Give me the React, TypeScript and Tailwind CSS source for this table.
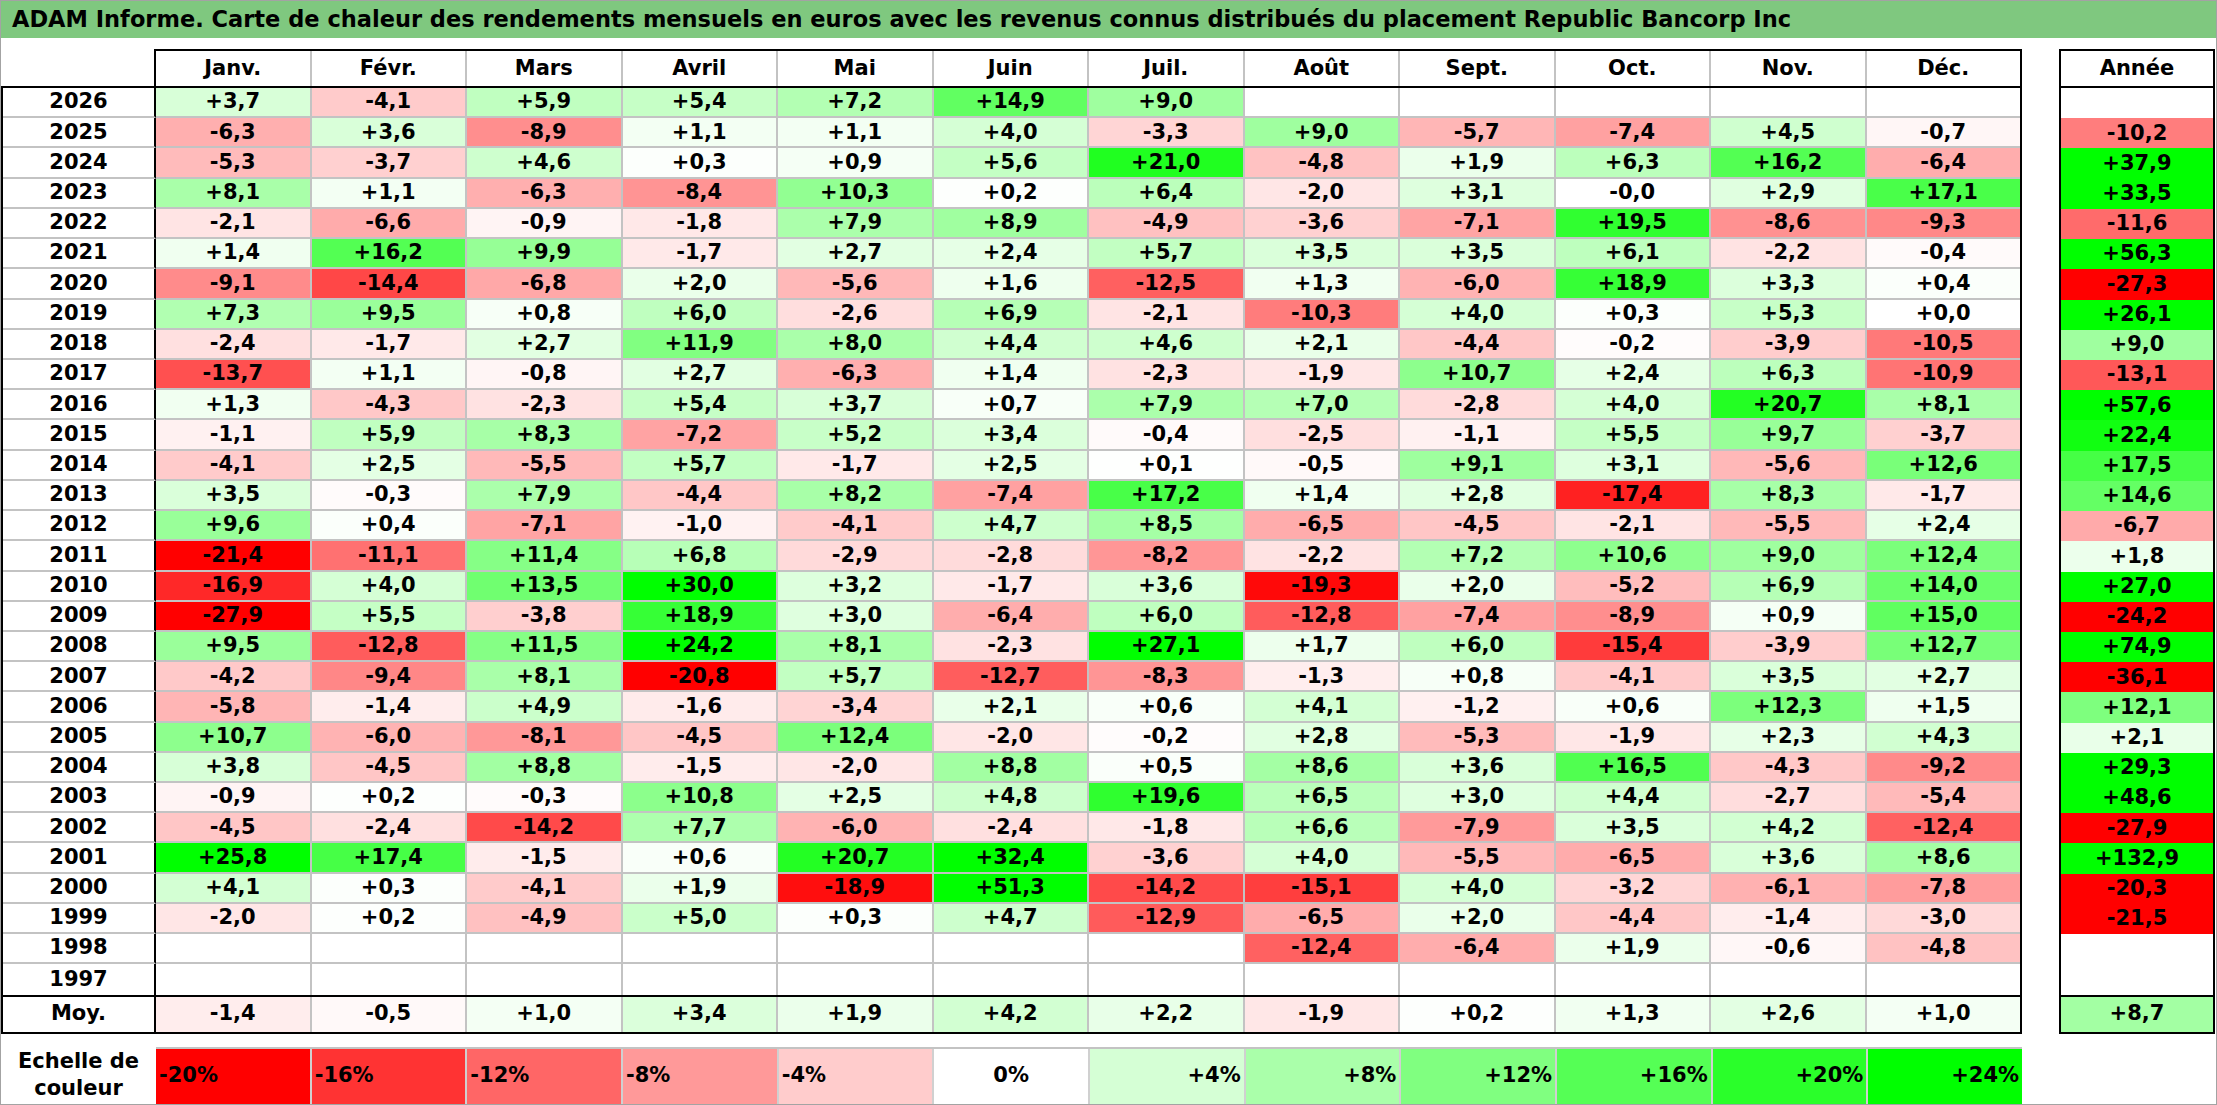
import React from "react";

const MONTHS = ["Janv.", "Févr.", "Mars", "Avril", "Mai", "Juin", "Juil.", "Août", "Sept.", "Oct.", "Nov.", "Déc."];

// année | 12 mois | total année ("." = vide)
const RAW = [
  "2026|+3,7 -4,1 +5,9 +5,4 +7,2 +14,9 +9,0 . . . . .|.",
  "2025|-6,3 +3,6 -8,9 +1,1 +1,1 +4,0 -3,3 +9,0 -5,7 -7,4 +4,5 -0,7|-10,2",
  "2024|-5,3 -3,7 +4,6 +0,3 +0,9 +5,6 +21,0 -4,8 +1,9 +6,3 +16,2 -6,4|+37,9",
  "2023|+8,1 +1,1 -6,3 -8,4 +10,3 +0,2 +6,4 -2,0 +3,1 -0,0 +2,9 +17,1|+33,5",
  "2022|-2,1 -6,6 -0,9 -1,8 +7,9 +8,9 -4,9 -3,6 -7,1 +19,5 -8,6 -9,3|-11,6",
  "2021|+1,4 +16,2 +9,9 -1,7 +2,7 +2,4 +5,7 +3,5 +3,5 +6,1 -2,2 -0,4|+56,3",
  "2020|-9,1 -14,4 -6,8 +2,0 -5,6 +1,6 -12,5 +1,3 -6,0 +18,9 +3,3 +0,4|-27,3",
  "2019|+7,3 +9,5 +0,8 +6,0 -2,6 +6,9 -2,1 -10,3 +4,0 +0,3 +5,3 +0,0|+26,1",
  "2018|-2,4 -1,7 +2,7 +11,9 +8,0 +4,4 +4,6 +2,1 -4,4 -0,2 -3,9 -10,5|+9,0",
  "2017|-13,7 +1,1 -0,8 +2,7 -6,3 +1,4 -2,3 -1,9 +10,7 +2,4 +6,3 -10,9|-13,1",
  "2016|+1,3 -4,3 -2,3 +5,4 +3,7 +0,7 +7,9 +7,0 -2,8 +4,0 +20,7 +8,1|+57,6",
  "2015|-1,1 +5,9 +8,3 -7,2 +5,2 +3,4 -0,4 -2,5 -1,1 +5,5 +9,7 -3,7|+22,4",
  "2014|-4,1 +2,5 -5,5 +5,7 -1,7 +2,5 +0,1 -0,5 +9,1 +3,1 -5,6 +12,6|+17,5",
  "2013|+3,5 -0,3 +7,9 -4,4 +8,2 -7,4 +17,2 +1,4 +2,8 -17,4 +8,3 -1,7|+14,6",
  "2012|+9,6 +0,4 -7,1 -1,0 -4,1 +4,7 +8,5 -6,5 -4,5 -2,1 -5,5 +2,4|-6,7",
  "2011|-21,4 -11,1 +11,4 +6,8 -2,9 -2,8 -8,2 -2,2 +7,2 +10,6 +9,0 +12,4|+1,8",
  "2010|-16,9 +4,0 +13,5 +30,0 +3,2 -1,7 +3,6 -19,3 +2,0 -5,2 +6,9 +14,0|+27,0",
  "2009|-27,9 +5,5 -3,8 +18,9 +3,0 -6,4 +6,0 -12,8 -7,4 -8,9 +0,9 +15,0|-24,2",
  "2008|+9,5 -12,8 +11,5 +24,2 +8,1 -2,3 +27,1 +1,7 +6,0 -15,4 -3,9 +12,7|+74,9",
  "2007|-4,2 -9,4 +8,1 -20,8 +5,7 -12,7 -8,3 -1,3 +0,8 -4,1 +3,5 +2,7|-36,1",
  "2006|-5,8 -1,4 +4,9 -1,6 -3,4 +2,1 +0,6 +4,1 -1,2 +0,6 +12,3 +1,5|+12,1",
  "2005|+10,7 -6,0 -8,1 -4,5 +12,4 -2,0 -0,2 +2,8 -5,3 -1,9 +2,3 +4,3|+2,1",
  "2004|+3,8 -4,5 +8,8 -1,5 -2,0 +8,8 +0,5 +8,6 +3,6 +16,5 -4,3 -9,2|+29,3",
  "2003|-0,9 +0,2 -0,3 +10,8 +2,5 +4,8 +19,6 +6,5 +3,0 +4,4 -2,7 -5,4|+48,6",
  "2002|-4,5 -2,4 -14,2 +7,7 -6,0 -2,4 -1,8 +6,6 -7,9 +3,5 +4,2 -12,4|-27,9",
  "2001|+25,8 +17,4 -1,5 +0,6 +20,7 +32,4 -3,6 +4,0 -5,5 -6,5 +3,6 +8,6|+132,9",
  "2000|+4,1 +0,3 -4,1 +1,9 -18,9 +51,3 -14,2 -15,1 +4,0 -3,2 -6,1 -7,8|-20,3",
  "1999|-2,0 +0,2 -4,9 +5,0 +0,3 +4,7 -12,9 -6,5 +2,0 -4,4 -1,4 -3,0|-21,5",
  "1998|. . . . . . . -12,4 -6,4 +1,9 -0,6 -4,8|.",
  "1997|. . . . . . . . . . . .|.",
];

const rows = RAW.map((line) => {
  const [year, months, total] = line.split("|");
  return {
    year,
    months: months.split(" ").map((v) => (v === "." ? null : v)),
    total: total === "." ? null : total,
  };
});

const AVG = ["-1,4", "-0,5", "+1,0", "+3,4", "+1,9", "+4,2", "+2,2", "-1,9", "+0,2", "+1,3", "+2,6", "+1,0"];
const AVG_TOTAL = "+8,7";

const SCALE = [-20, -16, -12, -8, -4, 0, 4, 8, 12, 16, 20, 24];

// rouge à -20 %, vert à +24 %
function heat(n: number) {
  if (n < 0) {
    const c = Math.round(255 * (1 - Math.min(1, -n / 20)));
    return `rgb(255,${c},${c})`;
  }
  if (n > 0) {
    const c = Math.round(255 * (1 - Math.min(1, n / 24)));
    return `rgb(${c},255,${c})`;
  }
  return "#ffffff";
}

function cellBg(v: string | null) {
  if (!v) return undefined;
  return heat(parseFloat(v.replace(",", ".")));
}

const ROW_H = "h-[30.23px]";

export default function App() {
  return (
    <div className="w-[2217px] h-[1105px] border border-[#a3a3a3] bg-white text-black font-['DejaVu_Sans',sans-serif] font-bold overflow-hidden">
      {/* Titre */}
      <div className="h-[37px] bg-[#7fc87f] flex items-center pl-[11px] text-[22.5px] whitespace-nowrap">
        ADAM Informe. Carte de chaleur des rendements mensuels en euros avec les revenus connus distribués du placement Republic Bancorp Inc
      </div>

      <div className="flex mt-[11px] text-[21px]">
        {/* Tableau principal */}
        <div className="w-[2021px] shrink-0">
          <div className="flex h-[39px]">
            <div className="w-[155px] shrink-0 border-r-2 border-b-2 border-black" />
            <div className="flex flex-1 border-t-2 border-b-2 border-r-2 border-black">
              {MONTHS.map((m, i) => (
                <div
                  key={m}
                  className={`flex-1 basis-0 flex items-center justify-center ${i < 11 ? "border-r-2 border-[#c3c3c3]" : ""}`}
                >
                  {m}
                </div>
              ))}
            </div>
          </div>

          {rows.map((r, ri) => {
            const last = ri === rows.length - 1;
            return (
              <div key={r.year} className={`flex ${ROW_H} border-l-2 border-r-2 border-black`}>
                <div
                  className={`w-[153px] shrink-0 flex items-center justify-center border-r-2 border-r-black ${last ? "" : "border-b-2 border-b-[#c3c3c3]"}`}
                >
                  {r.year}
                </div>
                {r.months.map((v, i) => (
                  <div
                    key={i}
                    style={{ backgroundColor: cellBg(v) }}
                    className={`flex-1 basis-0 flex items-center justify-center ${i < 11 ? "border-r-2 border-r-[#c3c3c3]" : ""} ${last ? "" : "border-b-2 border-b-[#c3c3c3]"}`}
                  >
                    {v}
                  </div>
                ))}
              </div>
            );
          })}

          <div className="flex h-[39px] border-2 border-black">
            <div className="w-[153px] shrink-0 flex items-center justify-center border-r-2 border-black">Moy.</div>
            {AVG.map((v, i) => (
              <div
                key={i}
                style={{ backgroundColor: cellBg(v) }}
                className={`flex-1 basis-0 flex items-center justify-center ${i < 11 ? "border-r-2 border-[#c3c3c3]" : ""}`}
              >
                {v}
              </div>
            ))}
          </div>

          {/* Echelle de couleur */}
          <div className="flex h-[57px] mt-[13px]">
            <div className="w-[155px] shrink-0 flex items-center justify-center text-center leading-[27px]">
              Echelle de
              <br />
              couleur
            </div>
            <div className="flex flex-1 border-t-2 border-[#c3c3c3]">
              {SCALE.map((s, i) => (
                <div
                  key={s}
                  style={{ backgroundColor: heat(s) }}
                  className={`flex-1 basis-0 flex items-center px-[3px] ${i < 11 ? "border-r-2 border-[#d0d0d0]" : ""} ${s < 0 ? "justify-start" : s === 0 ? "justify-center" : "justify-end"}`}
                >
                  {s > 0 ? `+${s}%` : `${s}%`}
                </div>
              ))}
            </div>
          </div>
        </div>

        {/* Colonne Année */}
        <div className="w-[156px] shrink-0 ml-[37px]">
          <div className="h-[39px] border-2 border-black flex items-center justify-center">Année</div>
          <div className="border-l-2 border-r-2 border-black">
            {rows.map((r) => (
              <div
                key={r.year}
                style={{ backgroundColor: cellBg(r.total) }}
                className={`${ROW_H} flex items-center justify-center`}
              >
                {r.total}
              </div>
            ))}
          </div>
          <div
            style={{ backgroundColor: cellBg(AVG_TOTAL) }}
            className="h-[39px] border-2 border-black flex items-center justify-center"
          >
            {AVG_TOTAL}
          </div>
        </div>
      </div>
    </div>
  );
}
